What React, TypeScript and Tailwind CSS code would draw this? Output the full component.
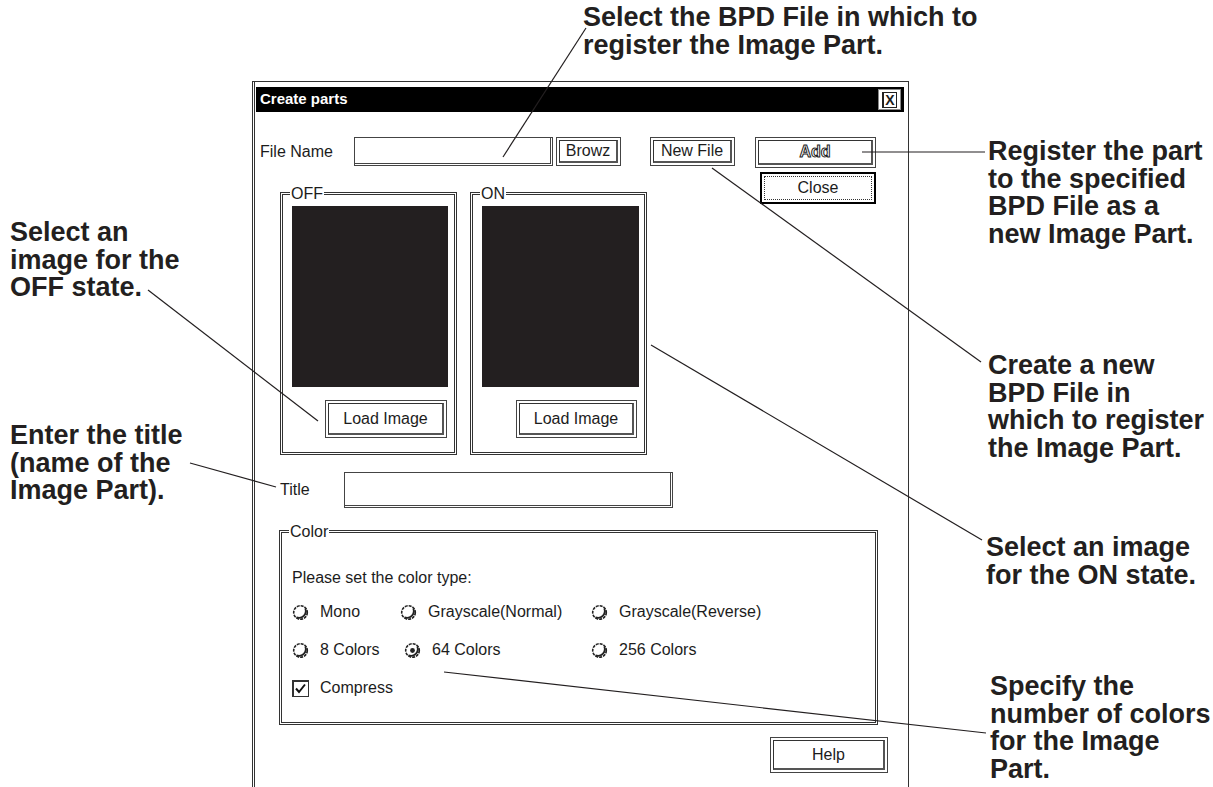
import type { ReactNode } from 'react';

const ui = "font-['Liberation_Sans',Arial,sans-serif]";

function Btn({ className, children }: { className: string; children?: ReactNode }) {
  return (
    <div className={`${className} flex border border-[#444] p-[2px]`}>
      <div className="flex flex-1 items-center justify-center border-t border-l border-b-2 border-r-2 border-[#333] border-b-[#555] border-r-[#555]">
        {children}
      </div>
    </div>
  );
}

function Radio({ on }: { on?: boolean }) {
  return (
    <svg width="17" height="17" viewBox="0 0 17 17" className="shrink-0">
      <circle cx="8.5" cy="8.5" r="6.8" fill="none" stroke="#222" strokeWidth="1.6" strokeDasharray="3 1" />
      <path d="M13.3 4.5 A6.8 6.8 0 0 1 4.5 13.3" fill="none" stroke="#222" strokeWidth="1.8" />
      {on && <circle cx="8.5" cy="8.5" r="2.4" fill="#222" />}
    </svg>
  );
}

function Check() {
  return (
    <div className="h-[17px] w-[17px] shrink-0 border-t-2 border-l-2 border-b border-r border-[#333] bg-white">
      <svg width="13" height="13" viewBox="0 0 13 13">
        <path d="M2 6.5 L5 10 L11 2.5" fill="none" stroke="#111" strokeWidth="2" />
      </svg>
    </div>
  );
}

function Group({ label, className, children }: { label: string; className: string; children?: ReactNode }) {
  return (
    <div className={`${className} flex flex-col border-[3px] border-double border-[#333]`}>
      <div className="-mt-[10px] ml-[7px] h-[18px] self-start bg-white px-[1px] leading-[18px]">{label}</div>
      {children}
    </div>
  );
}

const note = "absolute font-['Liberation_Sans',Arial,sans-serif] text-[27px] font-bold leading-[27.5px] text-[#231f20] whitespace-nowrap";

export default function App() {
  return (
    <div className={`relative h-[787px] w-[1213px] overflow-hidden bg-white text-[16px] text-[#1c1c1c] ${ui}`}>
      <div className="ml-[252px] pt-[81px]">
        {/* dialog */}
        <div className="h-[706px] w-[657px] border-t border-l-[3px] border-r border-double border-[#333]">
          {/* title bar */}
          <div className="ml-[1px] mr-[4px] mt-[5px] flex h-[25px] items-center bg-black pl-[4px] pr-[3px]">
            <span className="text-[15px] font-bold text-white">Create parts</span>
            <div className="ml-auto flex h-[21px] w-[23px] items-center justify-center border border-[#888] bg-white">
              <span className="border border-l-2 border-[#222] px-[1px] text-[14px] font-bold leading-[14px]">X</span>
            </div>
          </div>

          <div className="mt-[25px] flex">
            <div>
              <div className="flex h-[29px] items-center">
                <span className="ml-[5px] w-[94px]">File Name</span>
                <div className="h-[29px] w-[199px] border-t border-l border-b-[3px] border-r-[3px] border-double border-[#444]" />
                <Btn className="ml-[3px] h-[29px] w-[65px]">Browz</Btn>
                <Btn className="ml-[29px] h-[29px] w-[85px]">New File</Btn>
              </div>
              <div className="ml-[25px] mt-[26px] flex gap-[13px]">
                <Group label="OFF" className="h-[263px] w-[177px]">
                  <div className="ml-[9px] mt-[3px] h-[181px] w-[156px] bg-[#231f20]" />
                  <Btn className="ml-[42px] mt-[13px] h-[38px] w-[122px]">Load Image</Btn>
                </Group>
                <Group label="ON" className="h-[263px] w-[177px]">
                  <div className="ml-[9px] mt-[3px] h-[181px] w-[157px] bg-[#231f20]" />
                  <Btn className="ml-[43px] mt-[13px] h-[38px] w-[121px]">Load Image</Btn>
                </Group>
              </div>
            </div>
            <div className="ml-[20px] flex flex-col">
              <Btn className="h-[31px] w-[121px]">
                <span className="font-bold text-white [-webkit-text-stroke:1px_#222]">Add</span>
              </Btn>
              <div className="ml-[5px] mt-[4px] flex h-[32px] w-[116px] border-2 border-black p-[2px]">
                <div className="flex flex-1 items-center justify-center border border-dotted border-[#333]">Close</div>
              </div>
            </div>
          </div>

          <div className="mt-[17px] flex items-center">
            <span className="ml-[25px] w-[64px]">Title</span>
            <div className="h-[36px] w-[329px] border-t border-l border-b-[3px] border-r-[3px] border-double border-[#444]" />
          </div>

          <Group label="Color" className="ml-[24px] mt-[22px] h-[195px] w-[599px]">
            <div className="pl-[10px]">
              <div className="mt-[27px] h-[20px] leading-[20px]">Please set the color type:</div>
              <div className="mt-[14px] flex h-[20px] items-center">
                <div className="flex w-[108px] items-center gap-[11px]"><Radio />Mono</div>
                <div className="flex w-[191px] items-center gap-[11px]"><Radio />Grayscale(Normal)</div>
                <div className="flex items-center gap-[11px]"><Radio />Grayscale(Reverse)</div>
              </div>
              <div className="mt-[18px] flex h-[20px] items-center">
                <div className="flex w-[112px] items-center gap-[11px]"><Radio />8 Colors</div>
                <div className="flex w-[187px] items-center gap-[11px]"><Radio on />64 Colors</div>
                <div className="flex items-center gap-[11px]"><Radio />256 Colors</div>
              </div>
              <div className="mt-[18px] flex h-[20px] items-center gap-[11px]">
                <Check />Compress
              </div>
            </div>
          </Group>

          <Btn className="ml-[515px] mt-[12px] h-[36px] w-[118px]">Help</Btn>
        </div>
      </div>

      {/* callouts */}
      <svg className="pointer-events-none absolute left-0 top-0" width="1213" height="787">
        <g stroke="#231f20" strokeWidth="1.2">
          <line x1="586" y1="28" x2="503" y2="157" />
          <line x1="862" y1="152" x2="985" y2="152" />
          <line x1="148" y1="290" x2="318" y2="421" />
          <line x1="712" y1="168" x2="981" y2="362" />
          <line x1="190" y1="463" x2="276" y2="487" />
          <line x1="651" y1="345" x2="982" y2="540" />
          <line x1="444" y1="672" x2="986" y2="733" />
        </g>
      </svg>
      <div className={`${note} left-[583px] top-[4px]`}>Select the BPD File in which to<br />register the Image Part.</div>
      <div className={`${note} left-[988px] top-[138px]`}>Register the part<br />to the specified<br />BPD File as a<br />new Image Part.</div>
      <div className={`${note} left-[10px] top-[219px]`}>Select an<br />image for the<br />OFF state.</div>
      <div className={`${note} left-[988px] top-[352px]`}>Create a new<br />BPD File in<br />which to register<br />the Image Part.</div>
      <div className={`${note} left-[10px] top-[422px]`}>Enter the title<br />(name of the<br />Image Part).</div>
      <div className={`${note} left-[986px] top-[534px]`}>Select an image<br />for the ON state.</div>
      <div className={`${note} left-[990px] top-[673px]`}>Specify the<br />number of colors<br />for the Image<br />Part.</div>
    </div>
  );
}
